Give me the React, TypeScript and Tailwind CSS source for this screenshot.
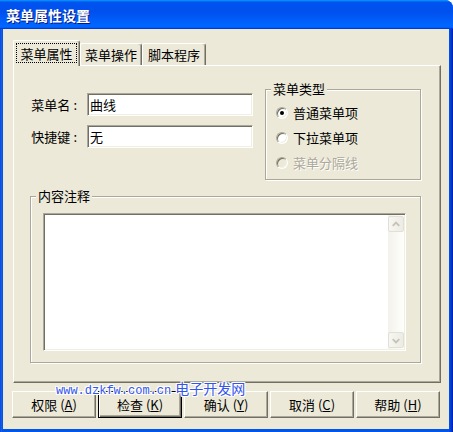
import React from "react";

function Radio({ checked, disabled }: { checked?: boolean; disabled?: boolean }) {
  return (
    <div
      className={`w-[12px] h-[12px] rounded-full border border-t-[#ACA899] border-l-[#ACA899] border-b-white border-r-white shadow-[inset_1px_1px_0_#716F64,inset_-1px_-1px_0_#F1EFE2] flex items-center justify-center ${
        disabled ? "bg-[#ECE9D8]" : "bg-white"
      }`}
    >
      {checked && <div className="w-[4px] h-[4px] rounded-full bg-black" />}
    </div>
  );
}

function Btn({ label, k, def }: { label: string; k: string; def?: boolean }) {
  return (
    <div
      className={`w-[84px] h-[27px] flex items-center justify-center text-[13px] leading-none text-black ${
        def
          ? "border border-black shadow-[inset_1px_1px_0_#fff,inset_-1px_-1px_0_#716F64,inset_-2px_-2px_0_#ACA899]"
          : "border border-t-white border-l-white border-b-[#716F64] border-r-[#716F64] shadow-[inset_-1px_-1px_0_#ACA899]"
      }`}
    >
      <span>
        {label}
        <span className="ml-[3px]">
          (<span className="underline">{k}</span>)
        </span>
      </span>
    </div>
  );
}

function Chevron({ up }: { up?: boolean }) {
  return (
    <svg width="15" height="15" viewBox="0 0 15 15">
      <path
        d={up ? "M4 9 L7.5 5.5 L11 9" : "M4 6 L7.5 9.5 L11 6"}
        fill="none"
        stroke="#C5C3B6"
        strokeWidth="2"
      />
    </svg>
  );
}

export default function App() {
  return (
    <div className="relative w-[453px] h-[432px] flex flex-col bg-[#0055EA] rounded-tr-[8px] overflow-hidden [font-family:'Noto_Sans_CJK_SC','Noto_Sans',sans-serif]">
      {/* Title bar */}
      <div className="h-[29px] shrink-0 flex items-center px-[6px] bg-[linear-gradient(180deg,#0997ff,#0053ee_8%,#0050ee_40%,#06f_88%,#06f_93%,#005bff_95%,#003dd7_96%,#003dd7)]">
        <span className="text-white font-bold text-[14px] leading-none [text-shadow:1px_1px_0_#0A1883]">
          菜单属性设置
        </span>
      </div>

      {/* Body */}
      <div className="flex-1 flex pl-[3px] pr-[4px] pb-[3px] bg-[linear-gradient(90deg,#0831d9,#166aee_1px,#0855dd_2px,#0055ea_3px,#0055ea_calc(100%-4px),#003bda_calc(100%-2px),#001ea0)]">
        <div className="flex-1 bg-[#ECE9D8] flex flex-col">
          {/* Tabs */}
          <div className="mt-[11px] pl-[10px] h-[25px] flex items-end text-[13px] leading-none text-black">
            <div className="relative z-10 -mb-px w-[67px] h-[26px] bg-[#ECE9D8] border-t border-l border-r border-t-white border-l-white border-r-[#716F64] shadow-[inset_-1px_0_0_#ACA899] rounded-tr-[3px] rounded-tl-[2px] px-[2px] pt-[2px]">
              <div className="h-[20px] border border-dotted border-black flex items-center justify-center">
                菜单属性
              </div>
            </div>
            <div className="w-[62px] h-[22px] border-t border-l border-r border-t-white border-l-white border-r-[#716F64] shadow-[inset_-1px_0_0_#ACA899] rounded-tr-[3px] rounded-tl-[2px] flex items-center justify-center">
              菜单操作
            </div>
            <div className="w-[64px] h-[22px] border-t border-l border-r border-t-white border-l-white border-r-[#716F64] shadow-[inset_-1px_0_0_#ACA899] rounded-tr-[3px] rounded-tl-[2px] flex items-center justify-center">
              脚本程序
            </div>
          </div>

          {/* Panel */}
          <div className="ml-[10px] w-[428px] h-[318px] border border-t-white border-l-white border-r-[#716F64] border-b-[#716F64] shadow-[inset_-1px_-1px_0_#ACA899] flex flex-col text-[13px] leading-none text-black">
            <div className="pt-[23px] flex">
              {/* Left column */}
              <div className="w-[251px] flex flex-col pt-[4px] gap-[9px]">
                <div className="flex items-center">
                  <div className="w-[73px] pr-[10px] text-right">
                    菜单名<span className="ml-[3px]">:</span>
                  </div>
                  <div className="w-[166px] h-[23px] bg-white border border-t-[#ACA899] border-l-[#ACA899] border-b-white border-r-white shadow-[inset_1px_1px_0_#716F64,inset_-1px_-1px_0_#F1EFE2] flex items-center pl-[2px]">
                    曲线
                  </div>
                </div>
                <div className="flex items-center">
                  <div className="w-[73px] pr-[10px] text-right">
                    快捷键<span className="ml-[3px]">:</span>
                  </div>
                  <div className="w-[166px] h-[23px] bg-white border border-t-[#ACA899] border-l-[#ACA899] border-b-white border-r-white shadow-[inset_1px_1px_0_#716F64,inset_-1px_-1px_0_#F1EFE2] flex items-center pl-[2px]">
                    无
                  </div>
                </div>
              </div>

              {/* Group box: 菜单类型 */}
              <div className="relative w-[156px] h-[91px] border border-[#ACA899] shadow-[inset_1px_1px_0_#fff,1px_1px_0_#fff] flex flex-col pt-[10px] pl-[10px]">
                <span className="absolute left-[5px] top-[-8px] px-[2px] bg-[#ECE9D8] leading-[14px]">
                  菜单类型
                </span>
                <div className="h-[25px] flex items-center gap-[5px]">
                  <Radio checked />
                  <span>普通菜单项</span>
                </div>
                <div className="h-[25px] flex items-center gap-[5px]">
                  <Radio />
                  <span>下拉菜单项</span>
                </div>
                <div className="h-[25px] flex items-center gap-[5px]">
                  <Radio disabled />
                  <span className="text-[#ACA899] [text-shadow:1px_1px_0_#fff]">菜单分隔线</span>
                </div>
              </div>
            </div>

            {/* Group box: 内容注释 */}
            <div className="relative ml-[16px] mt-[16px] w-[391px] h-[167px] border border-[#ACA899] shadow-[inset_1px_1px_0_#fff,1px_1px_0_#fff] pl-[12px] pt-[16px]">
              <span className="absolute left-[5px] top-[-8px] px-[2px] bg-[#ECE9D8] leading-[14px]">
                内容注释
              </span>
              <div className="w-[363px] h-[138px] bg-white border border-t-[#ACA899] border-l-[#ACA899] border-b-white border-r-white shadow-[inset_1px_1px_0_#716F64,inset_-1px_-1px_0_#F1EFE2] p-[1px] flex">
                <div className="flex-1" />
                <div className="w-[16px] flex flex-col bg-[linear-gradient(90deg,#F3F2EC,#FEFEFB)]">
                  <div className="h-[16px] mt-[1px] rounded-[2px] border border-[#E2E0D6] bg-[linear-gradient(90deg,#F7F6F1,#ECEBE4)] flex items-center justify-center">
                    <Chevron up />
                  </div>
                  <div className="flex-1" />
                  <div className="h-[16px] mb-[1px] rounded-[2px] border border-[#E2E0D6] bg-[linear-gradient(90deg,#F7F6F1,#ECEBE4)] flex items-center justify-center">
                    <Chevron />
                  </div>
                </div>
              </div>
            </div>
          </div>

          {/* Buttons */}
          <div className="mt-[8px] pl-[9px] flex gap-[2px]">
            <Btn label="权限" k="A" />
            <Btn label="检查" k="K" def />
            <Btn label="确认" k="Y" />
            <Btn label="取消" k="C" />
            <Btn label="帮助" k="H" />
          </div>
        </div>
      </div>

      {/* Watermark */}
      <div className="absolute left-[56px] top-[381px] flex items-baseline gap-[4px] text-[#3355EE] leading-none [text-shadow:0_0_1px_#fff,0_0_2px_#fff,1px_1px_0_#fff,-1px_-1px_0_#fff,1px_-1px_0_#fff,-1px_1px_0_#fff]">
        <span className="text-[12px] [font-family:'Liberation_Mono',monospace]">www.dzkfw.com.cn</span>
        <span className="text-[14px]">电子开发网</span>
      </div>
    </div>
  );
}
